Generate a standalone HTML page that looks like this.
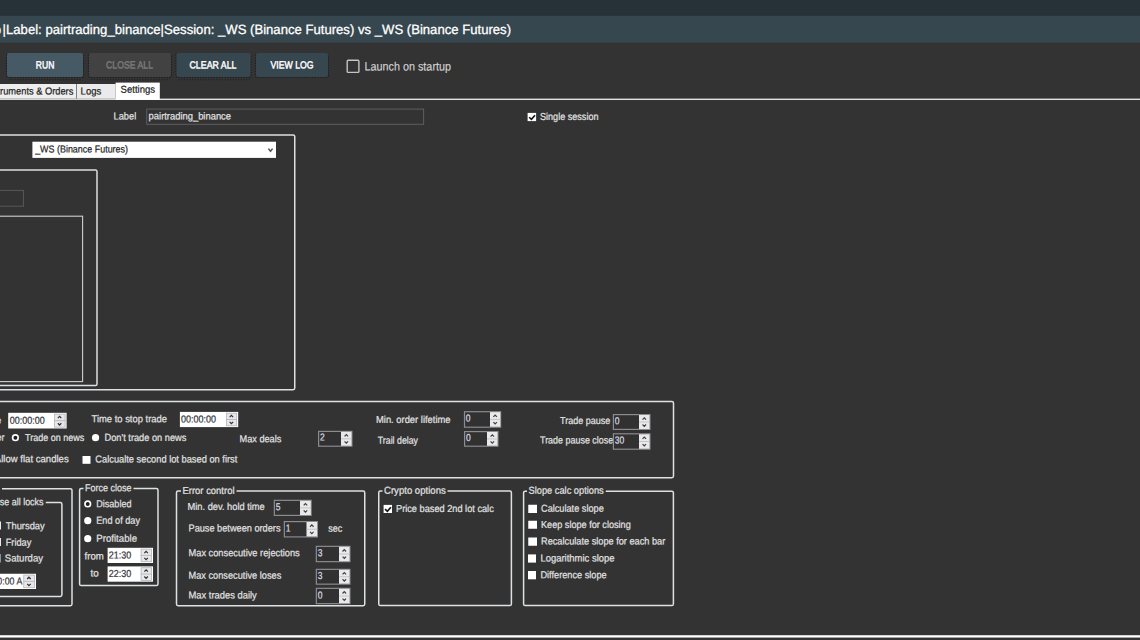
<!DOCTYPE html>
<html><head><meta charset="utf-8"><title>pairtrading_binance</title>
<style>
html,body{margin:0;padding:0;background:#333333;overflow:hidden}
svg{display:block;font-family:"Liberation Sans",sans-serif;text-rendering:geometricPrecision}
text{white-space:pre}
</style></head>
<body>
<svg width="1140" height="640" viewBox="0 0 1140 640">
<rect x="0" y="0" width="1140" height="640" fill="#333333"/>
<rect x="0.00" y="0.00" width="1140.00" height="15.80" fill="#263238"/>
<rect x="0.00" y="15.80" width="1140.00" height="26.80" fill="#37474f"/>
<text transform="translate(256.80,34.20) skewY(0.02)" x="-254.20" y="0" font-size="13.4" fill="#ffffff" stroke="#ffffff" stroke-width="0.28" textLength="508.41" lengthAdjust="spacingAndGlyphs">|Label: pairtrading_binance|Session: _WS (Binance Futures) vs _WS (Binance Futures)</text>
<text transform="translate(-2.23,34.20) skewY(0.04)" x="-3.43" y="0" font-size="13.4" fill="#ffffff" stroke="#ffffff" stroke-width="0.28" textLength="6.86" lengthAdjust="spacingAndGlyphs">o</text>
<path d="M6.50,54.50 V75.50 Q6.50,77.50 8.50,77.50 H81.50 Q83.50,77.50 83.50,75.50 V54.50" fill="none" stroke="#1b1b1b" stroke-width="1.1" stroke-dasharray="1.35 1.35" opacity="0.85"/>
<line x1="9.00" y1="79.7" x2="82.00" y2="79.7" stroke="#202020" stroke-width="1.1" stroke-dasharray="1.35 1.35" opacity="0.8"/>
<rect x="7.00" y="53.00" width="76.00" height="24.00" fill="#455a64" rx="2.2"/>
<text transform="translate(45.10,68.60) skewY(0.04)" x="-9.30" y="0" font-size="10.5" fill="#ffffff" stroke="#ffffff" stroke-width="0.45" textLength="18.60" lengthAdjust="spacingAndGlyphs">RUN</text>
<path d="M88.50,54.50 V75.50 Q88.50,77.50 90.50,77.50 H169.50 Q171.50,77.50 171.50,75.50 V54.50" fill="none" stroke="#1b1b1b" stroke-width="1.1" stroke-dasharray="1.35 1.35" opacity="0.85"/>
<line x1="91.00" y1="79.7" x2="170.00" y2="79.7" stroke="#202020" stroke-width="1.1" stroke-dasharray="1.35 1.35" opacity="0.8"/>
<rect x="89.00" y="53.00" width="82.00" height="24.00" fill="#424242" rx="2.2"/>
<text transform="translate(129.50,68.60) skewY(0.04)" x="-23.50" y="0" font-size="10.5" fill="#7a7a7a" stroke="#7a7a7a" stroke-width="0.45" textLength="47.00" lengthAdjust="spacingAndGlyphs">CLOSE ALL</text>
<path d="M176.00,54.50 V75.50 Q176.00,77.50 178.00,77.50 H249.00 Q251.00,77.50 251.00,75.50 V54.50" fill="none" stroke="#1b1b1b" stroke-width="1.1" stroke-dasharray="1.35 1.35" opacity="0.85"/>
<line x1="178.50" y1="79.7" x2="249.50" y2="79.7" stroke="#202020" stroke-width="1.1" stroke-dasharray="1.35 1.35" opacity="0.8"/>
<rect x="176.50" y="53.00" width="74.00" height="24.00" fill="#37474f" rx="2.2"/>
<text transform="translate(213.00,68.60) skewY(0.04)" x="-23.50" y="0" font-size="10.5" fill="#ffffff" stroke="#ffffff" stroke-width="0.45" textLength="47.00" lengthAdjust="spacingAndGlyphs">CLEAR ALL</text>
<path d="M255.50,54.50 V75.50 Q255.50,77.50 257.50,77.50 H326.50 Q328.50,77.50 328.50,75.50 V54.50" fill="none" stroke="#1b1b1b" stroke-width="1.1" stroke-dasharray="1.35 1.35" opacity="0.85"/>
<rect x="256.00" y="53.00" width="72.00" height="24.00" fill="#37474f" rx="2.2"/>
<text transform="translate(292.00,68.60) skewY(0.04)" x="-21.50" y="0" font-size="10.5" fill="#ffffff" stroke="#ffffff" stroke-width="0.45" textLength="43.00" lengthAdjust="spacingAndGlyphs">VIEW LOG</text>
<rect x="347.20" y="60.20" width="11.70" height="12.20" fill="none" stroke="#c4c4c4" stroke-width="1.4" rx="1"/>
<text transform="translate(407.75,70.50) skewY(0.04)" x="-43.25" y="0" font-size="12.1" fill="#d2d2d2" stroke="#d2d2d2" stroke-width="0.15" textLength="86.50" lengthAdjust="spacingAndGlyphs">Launch on startup</text>
<rect x="0.00" y="98.60" width="1140.00" height="1.40" fill="#e2e2e2"/>
<rect x="0.00" y="84.00" width="76.20" height="14.50" fill="#eeeeee"/>
<rect x="0.00" y="98.20" width="115.60" height="1.40" fill="#c9c9c9"/>
<rect x="76.20" y="84.00" width="0.80" height="15.00" fill="#8a8a8a"/>
<rect x="77.00" y="84.00" width="38.60" height="14.40" fill="#ebebeb"/>
<rect x="115.60" y="82.60" width="44.20" height="17.30" fill="#ffffff"/>
<text transform="translate(29.22,94.60) skewY(0.04)" x="-44.08" y="0" font-size="10.15" fill="#222222" stroke="#222222" stroke-width="0.22" textLength="88.15" lengthAdjust="spacingAndGlyphs">Instruments &amp; Orders</text>
<text transform="translate(90.90,94.60) skewY(0.04)" x="-10.30" y="0" font-size="10.15" fill="#222222" stroke="#222222" stroke-width="0.22" textLength="20.60" lengthAdjust="spacingAndGlyphs">Logs</text>
<text transform="translate(137.80,92.80) skewY(0.04)" x="-17.20" y="0" font-size="10.15" fill="#222222" stroke="#222222" stroke-width="0.22" textLength="34.40" lengthAdjust="spacingAndGlyphs">Settings</text>
<text transform="translate(124.90,119.40) skewY(0.04)" x="-11.30" y="0" font-size="10.15" fill="#e2e2e2" stroke="#e2e2e2" stroke-width="0.22" textLength="22.60" lengthAdjust="spacingAndGlyphs">Label</text>
<rect x="146.70" y="109.10" width="276.90" height="15.20" fill="#333333" stroke="#5e5e5e" stroke-width="1"/>
<text transform="translate(189.80,119.40) skewY(0.04)" x="-41.20" y="0" font-size="10.15" fill="#e2e2e2" stroke="#e2e2e2" stroke-width="0.22" textLength="82.40" lengthAdjust="spacingAndGlyphs">pairtrading_binance</text>
<rect x="527.60" y="112.90" width="8.50" height="8.20" fill="#ffffff"/>
<path d="M529.13,117.25 L531.43,119.38 L535.00,115.20" fill="none" stroke="#161616" stroke-width="1.65"/>
<text transform="translate(569.25,120.00) skewY(0.04)" x="-29.25" y="0" font-size="10.15" fill="#e2e2e2" stroke="#e2e2e2" stroke-width="0.22" textLength="58.50" lengthAdjust="spacingAndGlyphs">Single session</text>
<rect x="-10.00" y="135.00" width="304.75" height="254.70" rx="1.6" fill="none" stroke="#dde1e3" stroke-width="1.5"/>
<rect x="32.40" y="141.70" width="243.60" height="16.20" fill="#ffffff"/>
<text transform="translate(81.57,152.50) skewY(0.04)" x="-46.43" y="0" font-size="10.15" fill="#1e1e1e" stroke="#1e1e1e" stroke-width="0.22" textLength="92.85" lengthAdjust="spacingAndGlyphs">_WS (Binance Futures)</text>
<path d="M268.4,148.6 L270.5,151.2 L272.6,148.6" fill="none" stroke="#505050" stroke-width="1.5"/>
<rect x="-10.00" y="170.00" width="107.00" height="215.60" rx="1.6" fill="none" stroke="#dde1e3" stroke-width="1.5"/>
<rect x="-5.00" y="190.40" width="28.40" height="15.80" fill="#333333" stroke="#585858" stroke-width="1"/>
<rect x="-10.00" y="216.20" width="92.60" height="165.40" rx="0" fill="none" stroke="#d0d0d0" stroke-width="1.1"/>
<rect x="-10.00" y="401.50" width="683.50" height="76.20" rx="1.6" fill="none" stroke="#dde1e3" stroke-width="1.5"/>
<text transform="translate(-1.28,423.80) skewY(0.04)" x="-2.48" y="0" font-size="10.15" fill="#e2e2e2" stroke="#e2e2e2" stroke-width="0.22" textLength="4.97" lengthAdjust="spacingAndGlyphs">e</text>
<rect x="8.20" y="412.80" width="58.40" height="15.70" fill="#ffffff"/>
<rect x="54.50" y="414.10" width="10.60" height="13.10" fill="#e7e7ea" stroke="#b4b4bc" stroke-width="0.8"/>
<line x1="54.00" y1="420.65" x2="65.20" y2="420.65" stroke="#b0b0bb" stroke-width="0.8"/>
<path d="M57.85,418.18 L59.60,416.38 L61.35,418.18" fill="none" stroke="#333" stroke-width="1.2"/>
<path d="M57.85,423.22 L59.60,425.02 L61.35,423.22" fill="none" stroke="#333" stroke-width="1.2"/>
<text transform="translate(27.23,423.80) skewY(0.04)" x="-17.48" y="0" font-size="10.15" fill="#34343c" stroke="#34343c" stroke-width="0.22" textLength="34.97" lengthAdjust="spacingAndGlyphs">00:00:00</text>
<text transform="translate(129.25,422.30) skewY(0.04)" x="-37.75" y="0" font-size="10.15" fill="#e2e2e2" stroke="#e2e2e2" stroke-width="0.22" textLength="75.50" lengthAdjust="spacingAndGlyphs">Time to stop trade</text>
<rect x="179.90" y="411.90" width="58.30" height="15.20" fill="#ffffff"/>
<rect x="226.50" y="413.20" width="10.20" height="12.60" fill="#e7e7ea" stroke="#b4b4bc" stroke-width="0.8"/>
<line x1="226.00" y1="419.50" x2="236.80" y2="419.50" stroke="#b0b0bb" stroke-width="0.8"/>
<path d="M229.65,417.15 L231.40,415.35 L233.15,417.15" fill="none" stroke="#333" stroke-width="1.2"/>
<path d="M229.65,421.95 L231.40,423.75 L233.15,421.95" fill="none" stroke="#333" stroke-width="1.2"/>
<text transform="translate(198.48,422.40) skewY(0.04)" x="-17.48" y="0" font-size="10.15" fill="#34343c" stroke="#34343c" stroke-width="0.22" textLength="34.97" lengthAdjust="spacingAndGlyphs">00:00:00</text>
<text transform="translate(0.53,440.80) skewY(0.04)" x="-3.97" y="0" font-size="10.15" fill="#e2e2e2" stroke="#e2e2e2" stroke-width="0.22" textLength="7.94" lengthAdjust="spacingAndGlyphs">er</text>
<circle cx="15.40" cy="437.70" r="3.6" fill="#ffffff"/>
<circle cx="15.40" cy="437.70" r="1.95" fill="#1e1e1e"/>
<text transform="translate(54.60,440.90) skewY(0.04)" x="-29.60" y="0" font-size="10.15" fill="#e2e2e2" stroke="#e2e2e2" stroke-width="0.22" textLength="59.20" lengthAdjust="spacingAndGlyphs">Trade on news</text>
<circle cx="95.55" cy="437.70" r="3.6" fill="#ffffff"/>
<text transform="translate(145.40,440.90) skewY(0.04)" x="-40.90" y="0" font-size="10.15" fill="#e2e2e2" stroke="#e2e2e2" stroke-width="0.22" textLength="81.80" lengthAdjust="spacingAndGlyphs">Don&#x27;t trade on news</text>
<text transform="translate(260.40,442.30) skewY(0.04)" x="-20.90" y="0" font-size="10.15" fill="#e2e2e2" stroke="#e2e2e2" stroke-width="0.22" textLength="41.80" lengthAdjust="spacingAndGlyphs">Max deals</text>
<rect x="318.60" y="431.40" width="33.30" height="14.80" fill="#313131" stroke="#8b8b90" stroke-width="1.2"/>
<rect x="341.00" y="431.80" width="10.60" height="14.00" fill="#e9e9ea"/>
<line x1="341.00" y1="438.80" x2="351.60" y2="438.80" stroke="#b4b4c0" stroke-width="0.7"/>
<path d="M344.55,436.40 L346.30,434.60 L348.05,436.40" fill="none" stroke="#404040" stroke-width="1.2"/>
<path d="M344.55,441.30 L346.30,443.10 L348.05,441.30" fill="none" stroke="#404040" stroke-width="1.2"/>
<text transform="translate(322.27,440.40) skewY(0.04)" x="-2.37" y="0" font-size="10.15" fill="#dcdce4" stroke="#dcdce4" stroke-width="0.22" textLength="4.74" lengthAdjust="spacingAndGlyphs">2</text>
<text transform="translate(31.76,462.30) skewY(0.04)" x="-36.94" y="0" font-size="10.15" fill="#e2e2e2" stroke="#e2e2e2" stroke-width="0.22" textLength="73.88" lengthAdjust="spacingAndGlyphs">Allow flat candles</text>
<rect x="82.50" y="456.00" width="8.00" height="7.80" fill="#ffffff"/>
<text transform="translate(166.30,462.50) skewY(0.04)" x="-71.00" y="0" font-size="10.15" fill="#e2e2e2" stroke="#e2e2e2" stroke-width="0.22" textLength="142.00" lengthAdjust="spacingAndGlyphs">Calcualte second lot based on first</text>
<text transform="translate(413.25,423.10) skewY(0.04)" x="-37.25" y="0" font-size="10.15" fill="#e2e2e2" stroke="#e2e2e2" stroke-width="0.22" textLength="74.50" lengthAdjust="spacingAndGlyphs">Min. order lifetime</text>
<rect x="464.50" y="411.70" width="36.10" height="15.50" fill="#313131" stroke="#8b8b90" stroke-width="1.2"/>
<rect x="490.00" y="412.10" width="10.30" height="14.70" fill="#e9e9ea"/>
<line x1="490.00" y1="419.45" x2="500.30" y2="419.45" stroke="#b4b4c0" stroke-width="0.7"/>
<path d="M493.40,416.88 L495.15,415.08 L496.90,416.88" fill="none" stroke="#404040" stroke-width="1.2"/>
<path d="M493.40,422.12 L495.15,423.93 L496.90,422.12" fill="none" stroke="#404040" stroke-width="1.2"/>
<text transform="translate(468.17,421.60) skewY(0.04)" x="-2.37" y="0" font-size="10.15" fill="#dcdce4" stroke="#dcdce4" stroke-width="0.22" textLength="4.74" lengthAdjust="spacingAndGlyphs">0</text>
<text transform="translate(397.90,443.80) skewY(0.04)" x="-20.10" y="0" font-size="10.15" fill="#e2e2e2" stroke="#e2e2e2" stroke-width="0.22" textLength="40.20" lengthAdjust="spacingAndGlyphs">Trail delay</text>
<rect x="464.60" y="431.60" width="33.30" height="14.60" fill="#313131" stroke="#8b8b90" stroke-width="1.2"/>
<rect x="487.00" y="432.00" width="10.60" height="13.80" fill="#e9e9ea"/>
<line x1="487.00" y1="438.90" x2="497.60" y2="438.90" stroke="#b4b4c0" stroke-width="0.7"/>
<path d="M490.55,436.55 L492.30,434.75 L494.05,436.55" fill="none" stroke="#404040" stroke-width="1.2"/>
<path d="M490.55,441.35 L492.30,443.15 L494.05,441.35" fill="none" stroke="#404040" stroke-width="1.2"/>
<text transform="translate(468.27,441.10) skewY(0.04)" x="-2.37" y="0" font-size="10.15" fill="#dcdce4" stroke="#dcdce4" stroke-width="0.22" textLength="4.74" lengthAdjust="spacingAndGlyphs">0</text>
<text transform="translate(585.10,424.10) skewY(0.04)" x="-25.10" y="0" font-size="10.15" fill="#e2e2e2" stroke="#e2e2e2" stroke-width="0.22" textLength="50.20" lengthAdjust="spacingAndGlyphs">Trade pause</text>
<rect x="613.40" y="414.60" width="36.50" height="14.80" fill="#313131" stroke="#8b8b90" stroke-width="1.2"/>
<rect x="639.00" y="415.00" width="10.60" height="14.00" fill="#e9e9ea"/>
<line x1="639.00" y1="422.00" x2="649.60" y2="422.00" stroke="#b4b4c0" stroke-width="0.7"/>
<path d="M642.55,419.60 L644.30,417.80 L646.05,419.60" fill="none" stroke="#404040" stroke-width="1.2"/>
<path d="M642.55,424.50 L644.30,426.30 L646.05,424.50" fill="none" stroke="#404040" stroke-width="1.2"/>
<text transform="translate(617.07,424.20) skewY(0.04)" x="-2.37" y="0" font-size="10.15" fill="#dcdce4" stroke="#dcdce4" stroke-width="0.22" textLength="4.74" lengthAdjust="spacingAndGlyphs">0</text>
<text transform="translate(576.60,443.60) skewY(0.04)" x="-36.60" y="0" font-size="10.15" fill="#e2e2e2" stroke="#e2e2e2" stroke-width="0.22" textLength="73.20" lengthAdjust="spacingAndGlyphs">Trade pause close</text>
<rect x="613.40" y="433.80" width="36.50" height="15.40" fill="#313131" stroke="#8b8b90" stroke-width="1.2"/>
<rect x="639.00" y="434.20" width="10.60" height="14.60" fill="#e9e9ea"/>
<line x1="639.00" y1="441.50" x2="649.60" y2="441.50" stroke="#b4b4c0" stroke-width="0.7"/>
<path d="M642.55,438.95 L644.30,437.15 L646.05,438.95" fill="none" stroke="#404040" stroke-width="1.2"/>
<path d="M642.55,444.15 L644.30,445.95 L646.05,444.15" fill="none" stroke="#404040" stroke-width="1.2"/>
<text transform="translate(619.44,443.60) skewY(0.04)" x="-4.74" y="0" font-size="10.15" fill="#dcdce4" stroke="#dcdce4" stroke-width="0.22" textLength="9.48" lengthAdjust="spacingAndGlyphs">30</text>
<path d="M2.00,488.75 H70.40 Q72.00,488.75 72.00,490.35 V604.05 Q72.00,605.65 70.40,605.65 H-8.40 Q-10.00,605.65 -10.00,604.05 V490.35 Q-10.00,488.75 -8.40,488.75 H-20.00" fill="none" stroke="#dde1e3" stroke-width="1.5"/>
<path d="M45.75,502.60 H60.30 Q61.90,502.60 61.90,504.20 V594.80 Q61.90,596.40 60.30,596.40 H-8.40 Q-10.00,596.40 -10.00,594.80 V504.20 Q-10.00,502.60 -8.40,502.60 H-20.00" fill="none" stroke="#dde1e3" stroke-width="1.5"/>
<text transform="translate(21.66,505.30) skewY(0.04)" x="-21.84" y="0" font-size="10.15" fill="#e2e2e2" stroke="#e2e2e2" stroke-width="0.22" textLength="43.68" lengthAdjust="spacingAndGlyphs">se all locks</text>
<rect x="-2.00" y="521.50" width="2.90" height="8.00" fill="#ffffff"/>
<text transform="translate(25.25,529.30) skewY(0.04)" x="-19.50" y="0" font-size="10.15" fill="#e2e2e2" stroke="#e2e2e2" stroke-width="0.22" textLength="39.00" lengthAdjust="spacingAndGlyphs">Thursday</text>
<rect x="-2.00" y="538.00" width="2.90" height="8.00" fill="#ffffff"/>
<text transform="translate(18.50,545.80) skewY(0.04)" x="-12.75" y="0" font-size="10.15" fill="#e2e2e2" stroke="#e2e2e2" stroke-width="0.22" textLength="25.50" lengthAdjust="spacingAndGlyphs">Friday</text>
<rect x="-2.00" y="554.00" width="2.90" height="8.50" fill="#9a9a9a"/>
<text transform="translate(23.88,561.60) skewY(0.04)" x="-19.13" y="0" font-size="10.15" fill="#e2e2e2" stroke="#e2e2e2" stroke-width="0.22" textLength="38.25" lengthAdjust="spacingAndGlyphs">Saturday</text>
<rect x="-10.00" y="573.75" width="46.00" height="15.25" fill="#ffffff"/>
<rect x="23.75" y="575.05" width="10.75" height="12.65" fill="#e7e7ea" stroke="#b4b4bc" stroke-width="0.8"/>
<line x1="23.25" y1="581.38" x2="34.60" y2="581.38" stroke="#b0b0bb" stroke-width="0.8"/>
<path d="M27.18,579.01 L28.93,577.21 L30.68,579.01" fill="none" stroke="#333" stroke-width="1.2"/>
<path d="M27.18,583.84 L28.93,585.64 L30.68,583.84" fill="none" stroke="#333" stroke-width="1.2"/>
<text transform="translate(9.80,584.55) skewY(0.04)" x="-12.45" y="0" font-size="10.15" fill="#3a3a44" stroke="#3a3a44" stroke-width="0.22" textLength="24.90" lengthAdjust="spacingAndGlyphs">0:00 A</text>
<path d="M133.50,488.60 H156.40 Q158.00,488.60 158.00,490.20 V583.90 Q158.00,585.50 156.40,585.50 H81.20 Q79.60,585.50 79.60,583.90 V490.20 Q79.60,488.60 81.20,488.60 H83.50" fill="none" stroke="#dde1e3" stroke-width="1.5"/>
<text transform="translate(108.25,491.30) skewY(0.04)" x="-23.25" y="0" font-size="10.15" fill="#e2e2e2" stroke="#e2e2e2" stroke-width="0.22" textLength="46.50" lengthAdjust="spacingAndGlyphs">Force close</text>
<circle cx="87.75" cy="503.95" r="3.6" fill="#ffffff"/>
<circle cx="87.75" cy="503.95" r="1.95" fill="#1e1e1e"/>
<text transform="translate(113.88,507.30) skewY(0.04)" x="-17.63" y="0" font-size="10.15" fill="#e2e2e2" stroke="#e2e2e2" stroke-width="0.22" textLength="35.25" lengthAdjust="spacingAndGlyphs">Disabled</text>
<circle cx="87.75" cy="520.70" r="3.6" fill="#ffffff"/>
<text transform="translate(118.13,523.80) skewY(0.04)" x="-21.88" y="0" font-size="10.15" fill="#e2e2e2" stroke="#e2e2e2" stroke-width="0.22" textLength="43.75" lengthAdjust="spacingAndGlyphs">End of day</text>
<circle cx="87.75" cy="538.70" r="3.6" fill="#ffffff"/>
<text transform="translate(116.62,541.80) skewY(0.04)" x="-20.37" y="0" font-size="10.15" fill="#e2e2e2" stroke="#e2e2e2" stroke-width="0.22" textLength="40.75" lengthAdjust="spacingAndGlyphs">Profitable</text>
<text transform="translate(94.13,559.55) skewY(0.04)" x="-9.63" y="0" font-size="10.15" fill="#e2e2e2" stroke="#e2e2e2" stroke-width="0.22" textLength="19.25" lengthAdjust="spacingAndGlyphs">from</text>
<rect x="107.60" y="547.80" width="45.40" height="15.20" fill="#ffffff"/>
<rect x="141.10" y="549.10" width="10.40" height="12.60" fill="#e7e7ea" stroke="#b4b4bc" stroke-width="0.8"/>
<line x1="140.60" y1="555.40" x2="151.60" y2="555.40" stroke="#b0b0bb" stroke-width="0.8"/>
<path d="M144.35,553.05 L146.10,551.25 L147.85,553.05" fill="none" stroke="#333" stroke-width="1.2"/>
<path d="M144.35,557.85 L146.10,559.65 L147.85,557.85" fill="none" stroke="#333" stroke-width="1.2"/>
<text transform="translate(120.04,558.50) skewY(0.04)" x="-11.24" y="0" font-size="10.15" fill="#34343c" stroke="#34343c" stroke-width="0.22" textLength="22.48" lengthAdjust="spacingAndGlyphs">21:30</text>
<text transform="translate(94.62,576.55) skewY(0.04)" x="-4.12" y="0" font-size="10.15" fill="#e2e2e2" stroke="#e2e2e2" stroke-width="0.22" textLength="8.25" lengthAdjust="spacingAndGlyphs">to</text>
<rect x="107.60" y="566.40" width="45.40" height="15.30" fill="#ffffff"/>
<rect x="141.10" y="567.70" width="10.40" height="12.70" fill="#e7e7ea" stroke="#b4b4bc" stroke-width="0.8"/>
<line x1="140.60" y1="574.05" x2="151.60" y2="574.05" stroke="#b0b0bb" stroke-width="0.8"/>
<path d="M144.35,571.67 L146.10,569.88 L147.85,571.67" fill="none" stroke="#333" stroke-width="1.2"/>
<path d="M144.35,576.52 L146.10,578.32 L147.85,576.52" fill="none" stroke="#333" stroke-width="1.2"/>
<text transform="translate(120.04,577.10) skewY(0.04)" x="-11.24" y="0" font-size="10.15" fill="#34343c" stroke="#34343c" stroke-width="0.22" textLength="22.48" lengthAdjust="spacingAndGlyphs">22:30</text>
<path d="M236.50,491.10 H363.15 Q364.75,491.10 364.75,492.70 V604.10 Q364.75,605.70 363.15,605.70 H178.10 Q176.50,605.70 176.50,604.10 V492.70 Q176.50,491.10 178.10,491.10 H181.00" fill="none" stroke="#dde1e3" stroke-width="1.5"/>
<text transform="translate(208.50,494.05) skewY(0.04)" x="-26.00" y="0" font-size="10.15" fill="#e2e2e2" stroke="#e2e2e2" stroke-width="0.22" textLength="52.00" lengthAdjust="spacingAndGlyphs">Error control</text>
<text transform="translate(226.13,510.05) skewY(0.04)" x="-38.63" y="0" font-size="10.15" fill="#e2e2e2" stroke="#e2e2e2" stroke-width="0.22" textLength="77.25" lengthAdjust="spacingAndGlyphs">Min. dev. hold time</text>
<rect x="274.35" y="500.35" width="36.80" height="15.05" fill="#313131" stroke="#8b8b90" stroke-width="1.2"/>
<rect x="300.00" y="500.75" width="10.85" height="14.25" fill="#e9e9ea"/>
<line x1="300.00" y1="507.88" x2="310.85" y2="507.88" stroke="#b4b4c0" stroke-width="0.7"/>
<path d="M303.68,505.41 L305.43,503.61 L307.18,505.41" fill="none" stroke="#404040" stroke-width="1.2"/>
<path d="M303.68,510.44 L305.43,512.24 L307.18,510.44" fill="none" stroke="#404040" stroke-width="1.2"/>
<text transform="translate(278.02,510.20) skewY(0.04)" x="-2.37" y="0" font-size="10.15" fill="#dcdce4" stroke="#dcdce4" stroke-width="0.22" textLength="4.74" lengthAdjust="spacingAndGlyphs">5</text>
<text transform="translate(234.50,531.55) skewY(0.04)" x="-46.00" y="0" font-size="10.15" fill="#e2e2e2" stroke="#e2e2e2" stroke-width="0.22" textLength="92.00" lengthAdjust="spacingAndGlyphs">Pause between orders</text>
<rect x="284.35" y="521.60" width="33.05" height="15.30" fill="#313131" stroke="#8b8b90" stroke-width="1.2"/>
<rect x="306.50" y="522.00" width="10.60" height="14.50" fill="#e9e9ea"/>
<line x1="306.50" y1="529.25" x2="317.10" y2="529.25" stroke="#b4b4c0" stroke-width="0.7"/>
<path d="M310.05,526.73 L311.80,524.93 L313.55,526.73" fill="none" stroke="#404040" stroke-width="1.2"/>
<path d="M310.05,531.88 L311.80,533.67 L313.55,531.88" fill="none" stroke="#404040" stroke-width="1.2"/>
<text transform="translate(288.02,531.60) skewY(0.04)" x="-2.37" y="0" font-size="10.15" fill="#dcdce4" stroke="#dcdce4" stroke-width="0.22" textLength="4.74" lengthAdjust="spacingAndGlyphs">1</text>
<text transform="translate(335.25,531.80) skewY(0.04)" x="-7.00" y="0" font-size="10.15" fill="#e2e2e2" stroke="#e2e2e2" stroke-width="0.22" textLength="14.00" lengthAdjust="spacingAndGlyphs">sec</text>
<text transform="translate(244.13,556.30) skewY(0.04)" x="-55.63" y="0" font-size="10.15" fill="#e2e2e2" stroke="#e2e2e2" stroke-width="0.22" textLength="111.25" lengthAdjust="spacingAndGlyphs">Max consecutive rejections</text>
<rect x="316.35" y="546.35" width="33.55" height="15.30" fill="#313131" stroke="#8b8b90" stroke-width="1.2"/>
<rect x="339.00" y="546.75" width="10.60" height="14.50" fill="#e9e9ea"/>
<line x1="339.00" y1="554.00" x2="349.60" y2="554.00" stroke="#b4b4c0" stroke-width="0.7"/>
<path d="M342.55,551.48 L344.30,549.68 L346.05,551.48" fill="none" stroke="#404040" stroke-width="1.2"/>
<path d="M342.55,556.62 L344.30,558.42 L346.05,556.62" fill="none" stroke="#404040" stroke-width="1.2"/>
<text transform="translate(320.02,556.20) skewY(0.04)" x="-2.37" y="0" font-size="10.15" fill="#dcdce4" stroke="#dcdce4" stroke-width="0.22" textLength="4.74" lengthAdjust="spacingAndGlyphs">3</text>
<text transform="translate(234.88,578.80) skewY(0.04)" x="-46.38" y="0" font-size="10.15" fill="#e2e2e2" stroke="#e2e2e2" stroke-width="0.22" textLength="92.75" lengthAdjust="spacingAndGlyphs">Max consecutive loses</text>
<rect x="316.35" y="569.35" width="33.55" height="14.80" fill="#313131" stroke="#8b8b90" stroke-width="1.2"/>
<rect x="339.00" y="569.75" width="10.60" height="14.00" fill="#e9e9ea"/>
<line x1="339.00" y1="576.75" x2="349.60" y2="576.75" stroke="#b4b4c0" stroke-width="0.7"/>
<path d="M342.55,574.35 L344.30,572.55 L346.05,574.35" fill="none" stroke="#404040" stroke-width="1.2"/>
<path d="M342.55,579.25 L344.30,581.05 L346.05,579.25" fill="none" stroke="#404040" stroke-width="1.2"/>
<text transform="translate(320.02,579.00) skewY(0.04)" x="-2.37" y="0" font-size="10.15" fill="#dcdce4" stroke="#dcdce4" stroke-width="0.22" textLength="4.74" lengthAdjust="spacingAndGlyphs">3</text>
<text transform="translate(222.62,598.55) skewY(0.04)" x="-34.12" y="0" font-size="10.15" fill="#e2e2e2" stroke="#e2e2e2" stroke-width="0.22" textLength="68.25" lengthAdjust="spacingAndGlyphs">Max trades daily</text>
<rect x="316.35" y="588.35" width="33.55" height="15.30" fill="#313131" stroke="#8b8b90" stroke-width="1.2"/>
<rect x="339.00" y="588.75" width="10.60" height="14.50" fill="#e9e9ea"/>
<line x1="339.00" y1="596.00" x2="349.60" y2="596.00" stroke="#b4b4c0" stroke-width="0.7"/>
<path d="M342.55,593.48 L344.30,591.68 L346.05,593.48" fill="none" stroke="#404040" stroke-width="1.2"/>
<path d="M342.55,598.62 L344.30,600.42 L346.05,598.62" fill="none" stroke="#404040" stroke-width="1.2"/>
<text transform="translate(320.02,598.40) skewY(0.04)" x="-2.37" y="0" font-size="10.15" fill="#dcdce4" stroke="#dcdce4" stroke-width="0.22" textLength="4.74" lengthAdjust="spacingAndGlyphs">0</text>
<path d="M447.50,491.10 H509.80 Q511.40,491.10 511.40,492.70 V604.00 Q511.40,605.60 509.80,605.60 H380.35 Q378.75,605.60 378.75,604.00 V492.70 Q378.75,491.10 380.35,491.10 H382.50" fill="none" stroke="#dde1e3" stroke-width="1.5"/>
<text transform="translate(414.87,493.80) skewY(0.04)" x="-30.87" y="0" font-size="10.15" fill="#e2e2e2" stroke="#e2e2e2" stroke-width="0.22" textLength="61.75" lengthAdjust="spacingAndGlyphs">Crypto options</text>
<rect x="383.60" y="504.90" width="8.40" height="8.10" fill="#ffffff"/>
<path d="M385.11,509.19 L387.38,511.30 L390.91,507.17" fill="none" stroke="#161616" stroke-width="1.65"/>
<text transform="translate(444.88,512.05) skewY(0.04)" x="-48.88" y="0" font-size="10.15" fill="#e2e2e2" stroke="#e2e2e2" stroke-width="0.22" textLength="97.75" lengthAdjust="spacingAndGlyphs">Price based 2nd lot calc</text>
<path d="M605.75,491.20 H671.80 Q673.40,491.20 673.40,492.80 V604.00 Q673.40,605.60 671.80,605.60 H525.20 Q523.60,605.60 523.60,604.00 V492.80 Q523.60,491.20 525.20,491.20 H527.00" fill="none" stroke="#dde1e3" stroke-width="1.5"/>
<text transform="translate(566.13,493.80) skewY(0.04)" x="-37.63" y="0" font-size="10.15" fill="#e2e2e2" stroke="#e2e2e2" stroke-width="0.22" textLength="75.25" lengthAdjust="spacingAndGlyphs">Slope calc options</text>
<rect x="528.25" y="504.75" width="8.75" height="8.25" fill="#ffffff"/>
<text transform="translate(572.38,511.80) skewY(0.04)" x="-31.38" y="0" font-size="10.15" fill="#e2e2e2" stroke="#e2e2e2" stroke-width="0.22" textLength="62.75" lengthAdjust="spacingAndGlyphs">Calculate slope</text>
<rect x="528.25" y="520.75" width="8.75" height="8.00" fill="#ffffff"/>
<text transform="translate(585.88,528.05) skewY(0.04)" x="-44.88" y="0" font-size="10.15" fill="#e2e2e2" stroke="#e2e2e2" stroke-width="0.22" textLength="89.75" lengthAdjust="spacingAndGlyphs">Keep slope for closing</text>
<rect x="528.25" y="537.50" width="8.75" height="8.25" fill="#ffffff"/>
<text transform="translate(603.15,544.55) skewY(0.04)" x="-62.15" y="0" font-size="10.15" fill="#e2e2e2" stroke="#e2e2e2" stroke-width="0.22" textLength="124.30" lengthAdjust="spacingAndGlyphs">Recalculate slope for each bar</text>
<rect x="528.00" y="554.40" width="8.00" height="8.20" fill="#ffffff"/>
<text transform="translate(577.50,561.60) skewY(0.04)" x="-37.10" y="0" font-size="10.15" fill="#e2e2e2" stroke="#e2e2e2" stroke-width="0.22" textLength="74.20" lengthAdjust="spacingAndGlyphs">Logarithmic slope</text>
<rect x="528.00" y="571.00" width="8.00" height="8.30" fill="#ffffff"/>
<text transform="translate(573.55,578.30) skewY(0.04)" x="-33.15" y="0" font-size="10.15" fill="#e2e2e2" stroke="#e2e2e2" stroke-width="0.22" textLength="66.30" lengthAdjust="spacingAndGlyphs">Difference slope</text>
<rect x="0" y="635.2" width="1140" height="2.4" fill="#ececec"/>
<rect x="0" y="635.8" width="1140" height="1.2" fill="#ffffff"/>
</svg>
</body></html>
